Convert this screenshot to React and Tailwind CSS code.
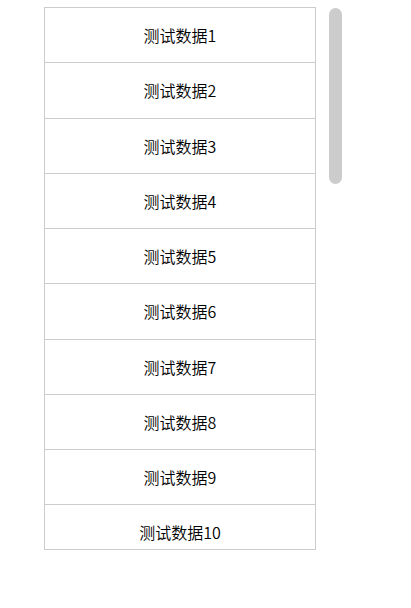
const rows = Array.from({ length: 10 }, (_, i) => `测试数据${i + 1}`)

export default function App() {
  return (
    <div className="w-[411px] h-[608px] bg-white flex items-start pt-[7px] pl-[44px] font-['Noto_Sans_CJK_SC','Noto_Sans',sans-serif]">
      {/* list */}
      <div className="w-[272px] h-[543px] border border-[#cccccc] overflow-hidden">
        {rows.map((r) => (
          <div
            key={r}
            className="h-[55.25px] border-b border-[#cccccc] flex items-center justify-center text-[16px] text-[#000] font-[350]"
          >
            {r}
          </div>
        ))}
      </div>

      {/* custom scrollbar */}
      <div className="ml-[13px] mt-[1px] w-[13px] h-[176px] rounded-full bg-[#cccccc]" />
    </div>
  )
}
